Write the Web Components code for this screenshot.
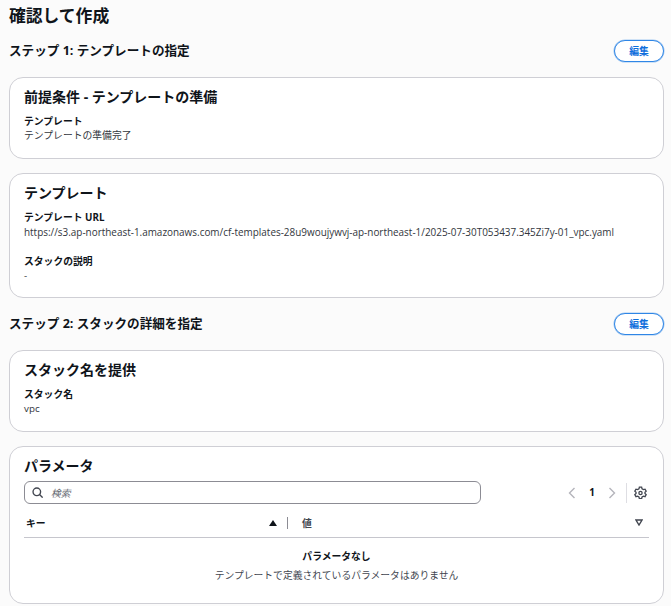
<!DOCTYPE html>
<html lang="ja">
<head>
<meta charset="utf-8">
<style>
  html, body { margin: 0; background: #fbfbfb; }
  body { font-family: "Open Sans", "Noto Sans CJK JP", sans-serif; color: #0f141a; overflow: hidden; }
</style>
</head>
<body>
<review-page>
  <step-header>ステップ 1: テンプレートの指定</step-header>
  <info-card heading="前提条件 - テンプレートの準備">
    <key-value label="テンプレート">テンプレートの準備完了</key-value>
  </info-card>
  <info-card heading="テンプレート">
    <key-value label="テンプレート URL" class="url">https://s3.ap-northeast-1.amazonaws.com/cf-templates-28u9woujywvj-ap-northeast-1/2025-07-30T053437.345Zi7y-01_vpc.yaml</key-value>
    <key-value label="スタックの説明" class="next">-</key-value>
  </info-card>
  <step-header>ステップ 2: スタックの詳細を指定</step-header>
  <info-card heading="スタック名を提供">
    <key-value label="スタック名">vpc</key-value>
  </info-card>
  <info-card heading="パラメータ">
    <param-table></param-table>
  </info-card>
</review-page>

<script>
  class ReviewPage extends HTMLElement {
    constructor() {
      super();
      this.attachShadow({mode: "open"});
      this.shadowRoot.innerHTML = `
      <style>
        :host { display: block; padding: 4px 7px 0 9px; }
        h1 { margin: 0 0 11px; font-size: 16.8px; line-height: 24px; font-weight: 700; }
      </style>
      <h1>確認して作成</h1>
      <slot></slot>
      `;
    }
  }
  customElements.define("review-page", ReviewPage);

  class StepHeader extends HTMLElement {
    constructor() {
      super();
      this.attachShadow({mode: "open"});
      this.shadowRoot.innerHTML = `
      <style>
        :host { display: flex; align-items: center; justify-content: space-between; height: 24px; margin-bottom: 14px; }
        h2 { margin: -1px 0 0; font-size: 12.6px; line-height: 20px; font-weight: 700; }
        button {
          width: 50px; height: 22px; padding: 0; box-sizing: border-box;
          border: 1px solid #2f86e6; border-radius: 11px; background: #fff;
          box-shadow: 0 0 0 .5px rgba(0, 108, 224, .35);
          color: #0f6fdc; font: 700 9.8px "Open Sans", "Noto Sans CJK JP", sans-serif;
        }
      </style>
      <h2><slot></slot></h2>
      <button>編集</button>
      `;
    }
  }
  customElements.define("step-header", StepHeader);

  class InfoCard extends HTMLElement {
    constructor() {
      super();
      this.attachShadow({mode: "open"});
      this.shadowRoot.innerHTML = `
      <style>
        :host {
          display: block; box-sizing: border-box; margin-bottom: 14px; padding: 9px 14px 15px;
          background: #fff; border: 1px solid #cfcfd5; border-radius: 14px;
        }
        h3 { margin: 0 0 8px; font-size: 14px; line-height: 20px; font-weight: 700; }
      </style>
      <h3 id="heading"></h3>
      <slot></slot>
      `;
    }

    connectedCallback() {
      this.shadowRoot.getElementById("heading").textContent = this.getAttribute("heading");
    }
  }
  customElements.define("info-card", InfoCard);

  class KeyValue extends HTMLElement {
    constructor() {
      super();
      this.attachShadow({mode: "open"});
      this.shadowRoot.innerHTML = `
      <style>
        :host { display: block; font-size: 9.8px; line-height: 14px; }
        :host(.next) { margin: 16px 0 -1px; }
        :host(.url) #value { font-size: 9.93px; }
        #label { font-weight: 700; }
        #value { color: #32363d; }
      </style>
      <div id="label"></div>
      <div id="value"><slot></slot></div>
      `;
    }

    connectedCallback() {
      this.shadowRoot.getElementById("label").textContent = this.getAttribute("label");
    }
  }
  customElements.define("key-value", KeyValue);

  class ParamTable extends HTMLElement {
    constructor() {
      super();
      this.attachShadow({mode: "open"});
      this.shadowRoot.innerHTML = `
      <style>
        :host { display: block; font-size: 9.8px; margin-top: -3px; }
        .tools { display: flex; align-items: flex-start; height: 24px; }
        .search {
          box-sizing: border-box; width: 457px; height: 23px; display: flex; align-items: center; gap: 8px;
          padding-left: 7px; border: 1px solid #8c8c94; border-radius: 6px;
          color: #656871; font-style: italic;
        }
        .pager { display: flex; align-items: center; height: 23px; margin-left: auto; padding-right: 2px; }
        .pager b { width: 30px; text-align: center; }
        .sep { width: 1px; height: 20px; background: #dedee3; margin: 0 7px 0 9px; }
        .head {
          box-sizing: border-box; display: flex; align-items: center; height: 33px; padding: 3px 6px 0 2px;
          border-bottom: 1px solid #c6c6cd; font-weight: 700;
        }
        .key { width: 261px; display: flex; align-items: center; justify-content: space-between; padding-right: 10px; box-sizing: border-box; }
        .rule { width: 1px; height: 12px; background: #8c8c94; margin: 0 14px 0 0; }
        .val { flex: 1; display: flex; align-items: center; justify-content: space-between; color: #424650; }
        .empty { text-align: center; padding: 9px 0 2px; line-height: 20px; }
        .empty b { display: block; margin-bottom: -1px; }
        .empty span { color: #424650; }
      </style>
      <div class="tools">
        <label class="search">
          <svg width="11" height="11" viewBox="0 0 16 16" fill="none" stroke="#424650" stroke-width="2"><circle cx="7" cy="7" r="5.5"/><path d="M11 11l4.5 4.5"/></svg>
          <span>検索</span>
        </label>
        <div class="pager">
          <svg width="10" height="12" viewBox="0 0 10 12" fill="none" stroke="#b4b4bb" stroke-width="1.4"><path d="M7.500 1L2.500 6l5 5"/></svg>
          <b>1</b>
          <svg width="10" height="12" viewBox="0 0 10 12" fill="none" stroke="#b4b4bb" stroke-width="1.4"><path d="M2.500 1l5 5-5 5"/></svg>
          <span class="sep"></span>
          <svg width="13" height="13" viewBox="0 0 16 16" fill="none" stroke="#424650" stroke-width="1.6"><path d="M6.600 1.500h2.800l.5 2 1.700 1 2-.6 1.400 2.400-1.500 1.400v1.600l1.500 1.400-1.400 2.400-2-.6-1.700 1-.5 2H6.600l-.5-2-1.700-1-2 .6L1 10.700l1.500-1.400V7.700L1 6.300l1.400-2.400 2 .6 1.700-1z"/><circle cx="8" cy="8.500" r="2"/></svg>
        </div>
      </div>
      <div class="head">
        <div class="key"><span>キー</span><svg width="8" height="6" viewBox="0 0 8 6"><path d="M4 0l4 6H0z" fill="#0f141a"/></svg></div>
        <span class="rule"></span>
        <div class="val"><span>値</span><svg width="8" height="7" viewBox="0 0 8 7" fill="none" stroke="#424650" stroke-width="1.400"><path d="M1 1h6L4 6z"/></svg></div>
      </div>
      <div class="empty"><b>パラメータなし</b><span>テンプレートで定義されているパラメータはありません</span></div>
      `;
    }
  }
  customElements.define("param-table", ParamTable);
</script>
</body>
</html>
